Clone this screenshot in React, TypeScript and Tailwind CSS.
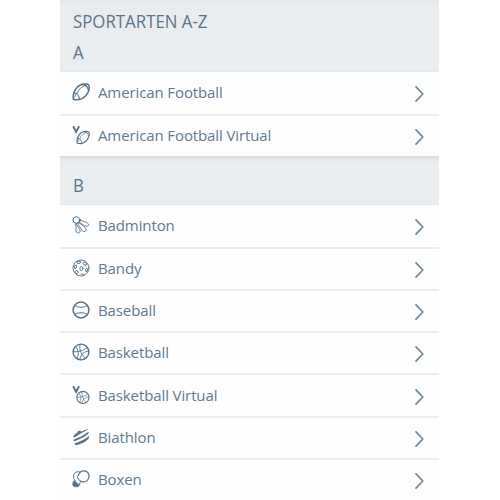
import React from 'react';

const stroke = { fill: 'none', stroke: 'currentColor', strokeLinecap: 'round', strokeLinejoin: 'round' } as const;

function FootballShape() {
  return (
    <g {...stroke}>
      <path strokeWidth="1.500" d="M1.400 16.200C.3 9.500 4.800 1.600 12 1.100c2-.1 4 .2 4.700.9.9 2.200.4 6.200-2 9.500C11.700 15.700 6.500 18 1.400 16.200Z" />
      <path strokeWidth="1.100" d="M1.700 9.700C5 9.800 7.300 12.500 7.200 16.300M10.500 1.600c3.200.3 5.300 2.300 5.800 5.400" />
      <path strokeWidth=".9" d="M5.200 10.300C6.500 6.500 9.300 3.800 13 2.500M2.900 14l1.200-3.200" />
    </g>
  );
}

function BasketballShape() {
  return (
    <g {...stroke}>
      <circle cx="9" cy="9" r="7.900" strokeWidth="1.400" />
      <path strokeWidth=".9" d="M1.200 8.600C6 9.500 12 7.500 15.300 4.400M8 1.200c-1 5.500 1.500 11.500 5.800 14.500M3.400 3.500c3.400 3 4 8.200 1.400 12.200M16.800 8.300c-4.300-.6-8.300 3-9 8.400" />
    </g>
  );
}

function VirtualMark() {
  return <path d="M1.200.3 4.100 6 7.100.3" fill="none" stroke="currentColor" strokeWidth="1.900" />;
}

function Icon({ kind }: { kind: string }) {
  return (
    <svg viewBox="0 0 18 18" className="h-[18px] w-[18px] shrink-0 overflow-visible text-[#557085]">
      {kind === 'football' && <FootballShape />}
      {kind === 'football-v' && (
        <>
          <VirtualMark />
          <g transform="translate(4 4.500) scale(.77)"><FootballShape /></g>
        </>
      )}
      {kind === 'badminton' && (
        <g {...stroke} strokeWidth=".85">
          <circle cx="4.300" cy="4" r="3.300" strokeWidth="1" />
          <path d="M3.400 8.200C5.800 7.900 8 6 8.500 3.500" strokeWidth="1.100" />
          <path d="M8.500 4.300 15 6.500l1.900 2.300-1.600 1.400-2.800-.4L7.600 6.300Z" />
          <path d="m7.200 6.800 5.800 4.400 1.400 2.900-1.400 1.700-2.600-.9-4.600-7.100Z" />
          <path d="m4.300 8.500 3.500 4.700.4 2.700-1.900 1.300-2-1.400Z" />
        </g>
      )}
      {kind === 'bandy' && (
        <g {...stroke} strokeWidth=".9">
          <circle cx="9" cy="9" r="8" />
          <ellipse cx="9.400" cy="9.500" rx="1.500" ry="2.200" />
          <ellipse cx="6.700" cy="3.500" rx="2" ry="1.100" transform="rotate(-15 6.700 3.500)" />
          <ellipse cx="12.800" cy="4.800" rx="1.900" ry="1.400" transform="rotate(38 12.800 4.800)" />
          <ellipse cx="3.500" cy="7.800" rx="1.100" ry="1.700" transform="rotate(25 3.500 7.800)" />
          <ellipse cx="4.700" cy="13" rx="1.200" ry="1.700" transform="rotate(-35 4.700 13)" />
          <ellipse cx="14.500" cy="11" rx="1.100" ry="1.700" transform="rotate(15 14.500 11)" />
          <path d="M9 15.200h2.800" />
        </g>
      )}
      {kind === 'baseball' && (
        <g {...stroke}>
          <circle cx="9" cy="9" r="7.900" strokeWidth="1.500" />
          <path strokeWidth="1" d="M2.600 4.300c3.500 2.700 9.300 2.700 12.800 0M2.600 13.700c3.500-2.700 9.300-2.700 12.800 0" />
        </g>
      )}
      {kind === 'basketball' && <BasketballShape />}
      {kind === 'basketball-v' && (
        <>
          <VirtualMark />
          <g transform="translate(4 4.500) scale(.77)"><BasketballShape /></g>
        </>
      )}
      {kind === 'biathlon' && (
        <g fill="currentColor">
          <path d="M1 8.500 3.300 5.800 5.200 5l.6-1.700 2.700-.5.500 1L15.500 1l.5.500-7.700 4.200L2.200 9.400Z" />
          <path d="M1 11.900C6 10.300 12.200 7.200 16.800 3.600l-.5 2.200C12 9.300 7.200 11.700 2.400 13.200Z" />
          <path d="M2 15.700C7 14.100 13 11.500 17.200 7.700l-.6 3C12.700 14.300 8.800 16.300 4.300 17.200Z" />
        </g>
      )}
      {kind === 'boxen' && (
        <g {...stroke}>
          <path strokeWidth="1.100" d="M6.300 5.500C7.200 2.200 9.600.8 12.200.9c3.400.2 5.200 2.900 4.700 6-.5 3.100-2.700 5-5.500 5-1.300 0-2.200-.4-3-.9" />
          <path strokeWidth="1" d="M5.900 8.200c-1.300-1.100-.7-2.800.8-3.100M3 10.700C.6 8.200 1.200 3.600 3.900 2.200c1.600-.8 3.400-.5 4.400.3M8.400 11.100c-.8-.5-1.800-1.500-2.500-2.900" />
          <path fill="currentColor" strokeWidth=".7" d="m2.500 10.700 4.200 3.800-.7 2.200H2.500L.8 15.200 1 12.500Z" />
          <path strokeWidth="1" d="m8.200 11.800-.8 3.600-1.300 1" />
        </g>
      )}
    </svg>
  );
}

function Row({ kind, label }: { kind: string; label: string }) {
  return (
    <li className="flex h-[42.2px] items-center border-b-2 border-[#e8edf1] bg-[#fefefe] pr-[15px] pb-[1.7px] pl-3 first:h-[43.8px] first:pb-px">
      <Icon kind={kind} />
      <span className="ml-2 grow text-[15px] leading-5 tracking-[-0.11px] whitespace-nowrap text-[#617a8d]">{label}</span>
      <svg viewBox="0 0 9 16" className="mt-1 h-4 w-[9px] shrink-0 text-[#718899]">
        <path d="m1 .8 6.800 7.200L1 15.200" {...stroke} strokeWidth="1.700" />
      </svg>
    </li>
  );
}

export default function App() {
  return (
    <main className="h-[500px] w-[500px] overflow-hidden bg-white font-['Open_Sans','Noto_Sans',sans-serif]">
      <div className="ml-[60px] w-[379px]">
        <header className="h-[72px] border-b border-[#e1e7eb] bg-linear-to-b from-[#e2e7eb] to-[#e9edf0] to-8% pt-[5px] pl-[13px] text-[18px] text-[#59748a]">
          <h1 className="origin-left scale-x-[.935] leading-8">SPORTARTEN A-Z</h1>
          <h2 className="origin-left scale-x-[.935] leading-[30px]">A</h2>
        </header>
        <ul className="h-[84px] overflow-hidden">
          <Row kind="football" label="American Football" />
          <Row kind="football-v" label="American Football Virtual" />
        </ul>
        <div className="h-[49px] border-t-2 border-b border-t-[#d6dee3] border-b-[#e1e7eb] bg-linear-to-b from-[#e2e7eb] to-[#e9edf0] to-12% pt-[11px] pl-[13px]">
          <h2 className="origin-left scale-x-[.935] text-[18px] leading-8 text-[#59748a]">B</h2>
        </div>
        <ul className="h-[295px] overflow-hidden">
          <Row kind="badminton" label="Badminton" />
          <Row kind="bandy" label="Bandy" />
          <Row kind="baseball" label="Baseball" />
          <Row kind="basketball" label="Basketball" />
          <Row kind="basketball-v" label="Basketball Virtual" />
          <Row kind="biathlon" label="Biathlon" />
          <Row kind="boxen" label="Boxen" />
        </ul>
      </div>
    </main>
  );
}
